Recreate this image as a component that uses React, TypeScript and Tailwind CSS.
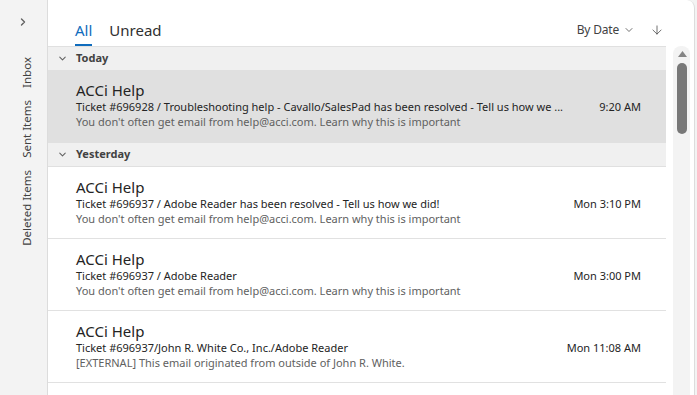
import { ChevronDown, ChevronRight, ArrowDown } from 'lucide-react';

interface Mail {
  id: number;
  sender: string;
  subject: string;
  preview: string;
  time: string;
  selected?: boolean;
}

const today: Mail[] = [
  {
    id: 1,
    sender: 'ACCi Help',
    subject: 'Ticket #696928 / Troubleshooting help - Cavallo/SalesPad has been resolved - Tell us how we ...',
    preview: "You don't often get email from help@acci.com. Learn why this is important",
    time: '9:20 AM',
    selected: true,
  },
];

const yesterday: Mail[] = [
  {
    id: 2,
    sender: 'ACCi Help',
    subject: 'Ticket #696937 / Adobe Reader has been resolved - Tell us how we did!',
    preview: "You don't often get email from help@acci.com. Learn why this is important",
    time: 'Mon 3:10 PM',
  },
  {
    id: 3,
    sender: 'ACCi Help',
    subject: 'Ticket #696937 / Adobe Reader',
    preview: "You don't often get email from help@acci.com. Learn why this is important",
    time: 'Mon 3:00 PM',
  },
  {
    id: 4,
    sender: 'ACCi Help',
    subject: 'Ticket #696937/John R. White Co., Inc./Adobe Reader',
    preview: '[EXTERNAL] This email originated from outside of John R. White.',
    time: 'Mon 11:08 AM',
  },
];

function GroupHeader({ label, last }: { label: string; last?: boolean }) {
  return (
    <div
      className={`flex items-center h-[24px] bg-[#f0f0f0] border-[#e0e0e0] ${
        last ? 'border-b' : 'border-t'
      }`}
    >
      <ChevronDown className="w-[11px] h-[11px] ml-[9px] text-[#616161]" strokeWidth={2.2} />
      <span className="ml-[8px] text-[11px] font-bold text-[#424242]">{label}</span>
    </div>
  );
}

function MailRow({ mail }: { mail: Mail }) {
  return (
    <div
      className={`h-[72px] pl-[28px] pr-[25px] pt-[10px] ${
        mail.selected ? 'bg-[#e0e0e0] h-[73px]' : 'bg-white border-b border-[#e1e1e1]'
      }`}
    >
      <div className="text-[15px] leading-[20px] text-[#242424]">{mail.sender}</div>
      <div className="flex items-center justify-between text-[11px] leading-[14px] text-[#242424]">
        <span className="whitespace-nowrap">{mail.subject}</span>
        <span className="whitespace-nowrap">{mail.time}</span>
      </div>
      <div className="text-[11px] leading-[15px] text-[#616161] whitespace-nowrap">{mail.preview}</div>
    </div>
  );
}

export default function App() {
  return (
    <div className="w-[697px] h-[395px] flex bg-[#f3f3f3] overflow-hidden font-['Segoe_UI','Noto_Sans',sans-serif] text-[#242424]">
      {/* Folder rail */}
      <aside className="w-[47px] shrink-0 flex flex-col items-center pt-[16px]">
        <ChevronRight className="w-[12px] h-[12px] text-[#616161] ml-[-2px]" strokeWidth={2.8} />
        <div className="mt-[27px] flex flex-col items-center text-[11.5px] text-[#424242] ml-[6px]">
          <div className="h-[35px] flex items-center justify-center">
            <span className="[writing-mode:vertical-rl] rotate-180">Inbox</span>
          </div>
          <div className="h-[57px] mt-[10px] flex items-center justify-center">
            <span className="[writing-mode:vertical-rl] rotate-180 whitespace-nowrap">Sent Items</span>
          </div>
          <div className="h-[71px] mt-[15px] flex items-center justify-center">
            <span className="[writing-mode:vertical-rl] rotate-180 whitespace-nowrap">Deleted Items</span>
          </div>
        </div>
      </aside>

      {/* Message list panel */}
      <main className="w-[648px] shrink-0 bg-white border-l border-r border-[#dcdcdc] rounded-tr-[8px] flex flex-col">
        <header className="h-[46px] shrink-0 flex items-end pl-[27px] pr-[30px]">
          <div className="flex gap-[17px]">
            <button className="text-[15px] leading-[20px] pb-[4px] border-b-2 border-[#0f6cbd] text-[#0f6cbd]">
              All
            </button>
            <button className="text-[15px] leading-[20px] pb-[4px] border-b-2 border-transparent text-[#303030]">
              Unread
            </button>
          </div>
          <div className="ml-auto flex items-center pb-[7px] text-[12px] text-[#424242]">
            <span className="tracking-[-0.2px]">By Date</span>
            <ChevronDown className="w-[12px] h-[12px] ml-[4px]" strokeWidth={1.5} />
            <ArrowDown className="w-[14px] h-[14px] ml-[15px]" strokeWidth={1.3} />
          </div>
        </header>

        <div className="flex flex-1 min-h-0">
          <div className="w-[618px] shrink-0">
            <GroupHeader label="Today" />
            {today.map((m) => (
              <MailRow key={m.id} mail={m} />
            ))}
            <GroupHeader label="Yesterday" last />
            {yesterday.map((m) => (
              <MailRow key={m.id} mail={m} />
            ))}
          </div>

          {/* Scrollbar */}
          <div className="ml-[7px] w-[17px] shrink-0 bg-[#f3f3f3] rounded-t-[8px] flex flex-col items-center pt-[5px]">
            <svg width="9" height="6" viewBox="0 0 9 6" className="ml-[1px]">
              <path d="M4.5 0 L9 6 L0 6 Z" fill="#858585" />
            </svg>
            <div className="mt-[6px] w-[10px] h-[71px] rounded-full bg-[#787878] ml-[1px]" />
          </div>
        </div>
      </main>
    </div>
  );
}
